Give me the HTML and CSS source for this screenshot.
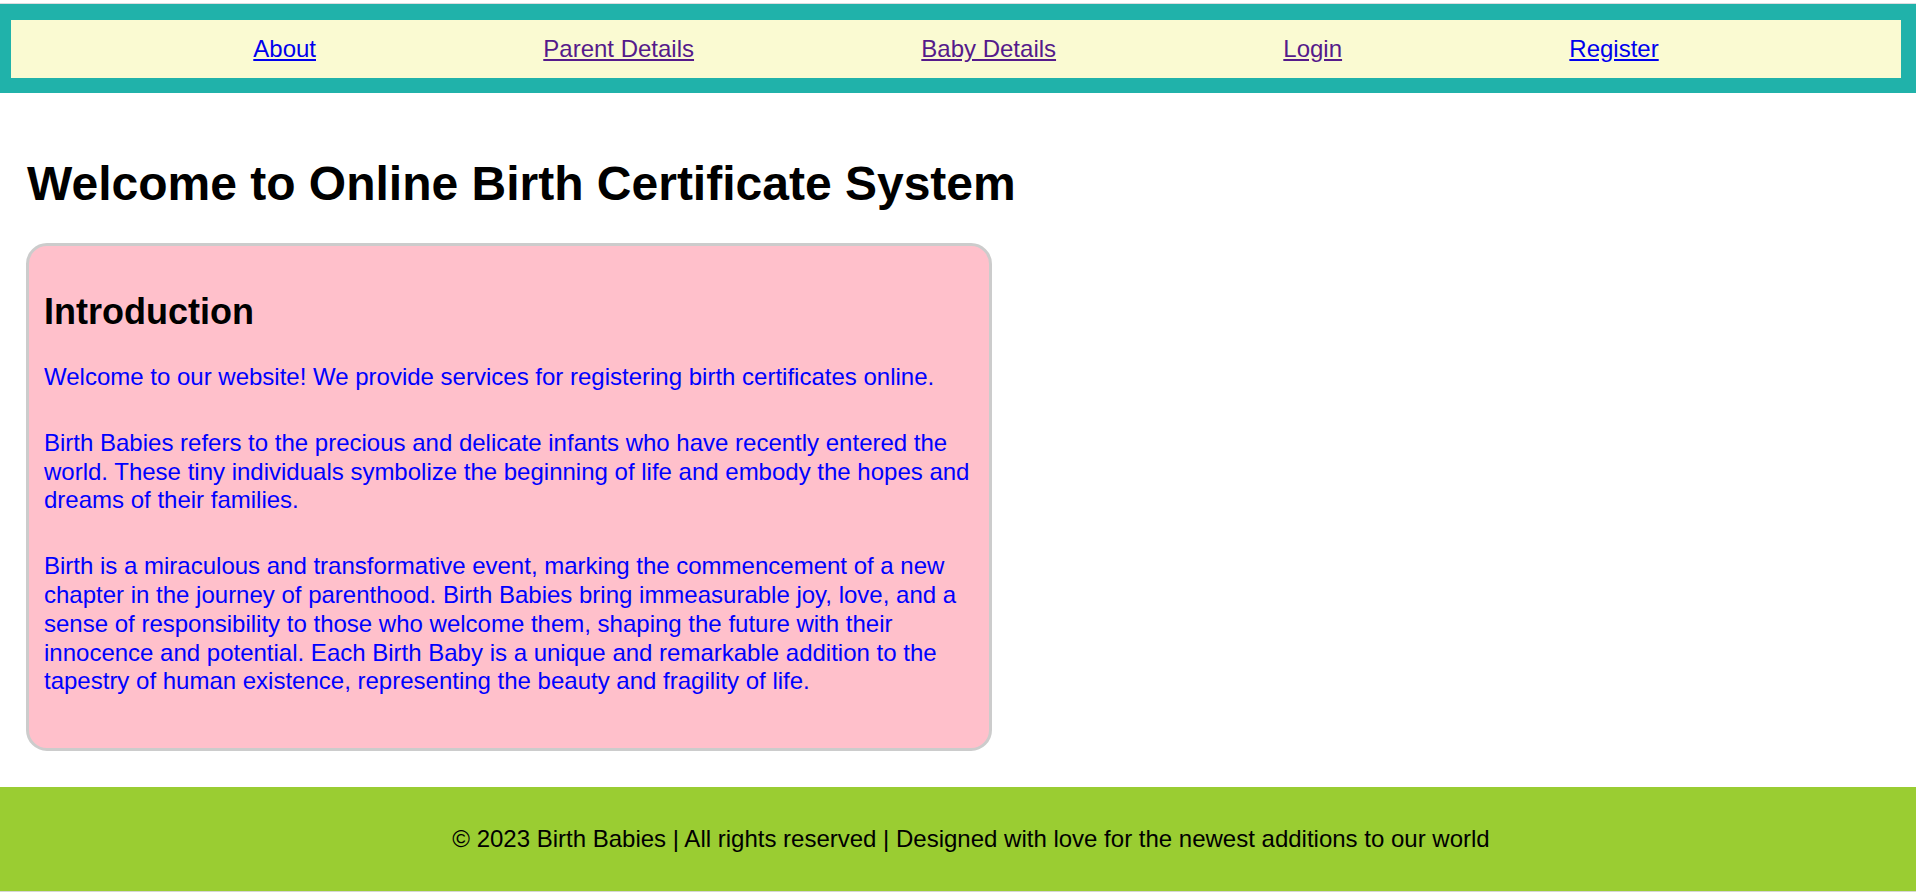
FILE: index.html
```html
<!DOCTYPE html>
<html lang="en">
<head>
<meta charset="utf-8">
<title>Online Birth Certificate System</title>
<link rel="stylesheet" href="styles.css">
</head>
<body>
<div class="topline"></div>
<header class="site-header">
  <nav class="nav">
    <a class="nav-link" href="#about">About</a>
    <a class="nav-link visited" href="#parent">Parent Details</a>
    <a class="nav-link visited" href="#baby">Baby Details</a>
    <a class="nav-link visited" href="#login">Login</a>
    <a class="nav-link" href="#register">Register</a>
  </nav>
</header>
<main class="main">
  <h1 class="title">Welcome to Online Birth Certificate System</h1>
  <section class="card">
    <h2 class="card-title">Introduction</h2>
    <p class="card-text">Welcome to our website! We provide services for registering birth certificates online.</p>
    <p class="card-text">Birth Babies refers to the precious and delicate infants who have recently entered the world. These tiny individuals symbolize the beginning of life and embody the hopes and dreams of their families.</p>
    <p class="card-text">Birth is a miraculous and transformative event, marking the commencement of a new chapter in the journey of parenthood. Birth Babies bring immeasurable joy, love, and a sense of responsibility to those who welcome them, shaping the future with their innocence and potential. Each Birth Baby is a unique and remarkable addition to the tapestry of human existence, representing the beauty and fragility of life.</p>
  </section>
</main>
<footer class="footer">
  <p class="footer-text">© 2023 Birth Babies | All rights reserved | Designed with love for the newest additions to our world</p>
</footer>
<div class="bottomline"></div>
</body>
</html>
```
FILE: styles.css
```css
html, body {
  margin: 0;
  padding: 0;
  background: #ffffff;
}

body {
  font-family: "Liberation Sans", Arial, sans-serif;
  color: #000000;
}

.topline {
  margin-top: 3px;
  height: 1px;
  background: #dcdce0;
}

.site-header {
  background: #20b2aa;
  padding: 16px 15px 15px 11px;
}

.nav {
  background: #fafad2;
  padding: 15px;
  display: flex;
  justify-content: space-evenly;
  align-items: center;
}

.nav-link {
  font-size: 24px;
  line-height: normal;
  color: #0000ee;
  text-decoration: underline;
}

.nav-link.visited {
  color: #551a8b;
}

.main {
  padding: 31px 26px 36px 26px;
}

.title {
  font-size: 48px;
  font-weight: bold;
  margin: 32px 0 32px 1px;
  line-height: normal;
}

.card {
  width: 930px;
  background: #ffc0cb;
  border: 3px solid #cccccc;
  border-radius: 21px;
  padding: 15px;
}

.card-title {
  font-size: 36px;
  font-weight: bold;
  margin: 30px 0 30px 0;
  line-height: normal;
}

.card-text {
  font-size: 24px;
  line-height: 28.8px;
  color: #0000ff;
  margin: 0 0 37px 0;
}

.footer {
  background: #9acd32;
  padding: 38px 0 38px 26px;
  text-align: center;
}

.footer-text {
  margin: 0;
  font-size: 24px;
  line-height: normal;
}

.bottomline {
  height: 2px;
  background: #d6d6d6;
}
```
